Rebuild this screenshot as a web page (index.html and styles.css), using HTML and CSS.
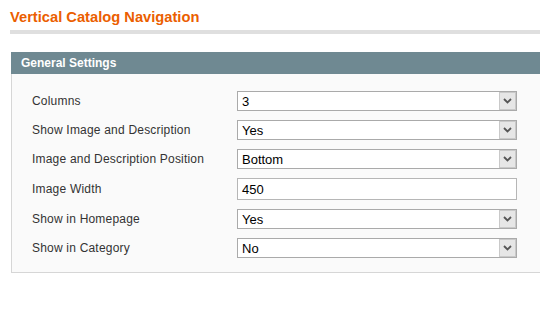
FILE: index.html
```html
<!DOCTYPE html>
<html lang="en">
<head>
  <meta charset="UTF-8">
  <title>Vertical Catalog Navigation</title>
  <link rel="stylesheet" href="styles.css">
</head>
<body>
  <div class="page">
    <div class="content-header">
      <h3>Vertical Catalog Navigation</h3>
    </div>

    <div class="section">
      <div class="section-head">General Settings</div>
      <div class="fieldset">
        <div class="form-grid">
          <label>Columns</label>
          <div class="select"><span>3</span><i class="arrow"><svg width="9" height="6" viewBox="0 0 9 6"><path d="M1 1 L4.5 4.5 L8 1" fill="none" stroke="#555" stroke-width="1.8"/></svg></i></div>

          <label>Show Image and Description</label>
          <div class="select"><span>Yes</span><i class="arrow"><svg width="9" height="6" viewBox="0 0 9 6"><path d="M1 1 L4.5 4.5 L8 1" fill="none" stroke="#555" stroke-width="1.8"/></svg></i></div>

          <label>Image and Description Position</label>
          <div class="select"><span>Bottom</span><i class="arrow"><svg width="9" height="6" viewBox="0 0 9 6"><path d="M1 1 L4.5 4.5 L8 1" fill="none" stroke="#555" stroke-width="1.8"/></svg></i></div>

          <label>Image Width</label>
          <div class="input-text">450</div>

          <label>Show in Homepage</label>
          <div class="select"><span>Yes</span><i class="arrow"><svg width="9" height="6" viewBox="0 0 9 6"><path d="M1 1 L4.5 4.5 L8 1" fill="none" stroke="#555" stroke-width="1.8"/></svg></i></div>

          <label>Show in Category</label>
          <div class="select"><span>No</span><i class="arrow"><svg width="9" height="6" viewBox="0 0 9 6"><path d="M1 1 L4.5 4.5 L8 1" fill="none" stroke="#555" stroke-width="1.8"/></svg></i></div>
        </div>
      </div>
    </div>
  </div>
</body>
</html>
```

FILE: styles.css
```css
body {
  margin: 0;
  font-family: "Liberation Sans", Arial, sans-serif;
  font-size: 12px;
  color: #2f2f2f;
  background: #fff;
  overflow: hidden;
}
.page {
  padding: 8px 0 0 10px;
}
.content-header {
  border-bottom: 4px solid #dfdfdf;
  margin-bottom: 18px;
}
.content-header h3 {
  margin: 0;
  padding-bottom: 4px;
  font-size: 14.7px;
  line-height: 18px;
  font-weight: bold;
  color: #eb5e00;
}
.section {
  margin-left: 1px;
}
.section-head {
  background: #6f8992;
  color: #fff;
  font-weight: bold;
  height: 22px;
  line-height: 22px;
  padding-left: 10px;
}
.fieldset {
  background: #fafafa;
  border: 1px solid #d6d6d6;
  border-top: none;
  border-right: none;
  padding: 17px 0 14px 20px;
}
.form-grid {
  display: grid;
  grid-template-columns: 205px 280px;
  row-gap: 9px;
  align-items: center;
}
.form-grid label {
  font-size: 12px;
  letter-spacing: 0.2px;
  color: #333;
}
.select, .input-text {
  box-sizing: border-box;
  display: flex;
  align-items: center;
  background: #fff;
  border: 1px solid #aaa;
  font-size: 13px;
  color: #000;
}
.select {
  height: 20px;
}
.select span {
  flex: 1;
  padding-left: 4px;
}
.input-text {
  height: 22px;
  padding-left: 4px;
  border-color: #b6b6b6;
}
.arrow {
  box-sizing: border-box;
  width: 17px;
  height: 18px;
  background: #e6e6e6;
  border: 1px solid #c9c9c9;
  display: flex;
  align-items: center;
  justify-content: center;
}
.arrow svg {
  display: block;
}
```
